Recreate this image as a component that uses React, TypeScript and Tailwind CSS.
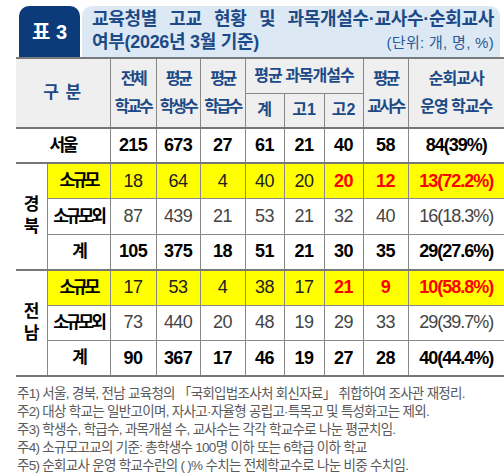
import React from 'react'

const FONT = { fontFamily: '"Liberation Sans", "Noto Sans CJK KR", sans-serif' }

type Row = {
  label: string
  vals: (string | number)[]
  kind: 'small' | 'other' | 'total'
  red?: number[]
}

const regions: { name: string[]; rows: Row[] }[] = [
  {
    name: ['경', '북'],
    rows: [
      { label: '소규모', vals: [18, 64, 4, 40, 20, 20, 12, '13(72.2%)'], kind: 'small', red: [5, 6, 7] },
      { label: '소규모외', vals: [87, 439, 21, 53, 21, 32, 40, '16(18.3%)'], kind: 'other' },
      { label: '계', vals: [105, 375, 18, 51, 21, 30, 35, '29(27.6%)'], kind: 'total' },
    ],
  },
  {
    name: ['전', '남'],
    rows: [
      { label: '소규모', vals: [17, 53, 4, 38, 17, 21, 9, '10(58.8%)'], kind: 'small', red: [5, 6, 7] },
      { label: '소규모외', vals: [73, 440, 20, 48, 19, 29, 33, '29(39.7%)'], kind: 'other' },
      { label: '계', vals: [90, 367, 17, 46, 19, 27, 28, '40(44.4%)'], kind: 'total' },
    ],
  },
]

const notes = [
  '주1) 서울, 경북, 전남 교육청의 「국회입법조사처 회신자료」 취합하여 조사관 재정리.',
  '주2) 대상 학교는 일반고이며, 자사고·자율형 공립고·특목고 및 특성화고는 제외.',
  '주3) 학생수, 학급수, 과목개설 수, 교사수는 각각 학교수로 나눈 평균치임.',
  '주4) 소규모고교의 기준: 총학생수 100명 이하 또는 6학급 이하 학교',
  '주5) 순회교사 운영 학교수란의 ( )% 수치는 전체학교수로 나눈 비중 수치임.',
]

function cellClass(row: Row, i: number) {
  const red = row.red?.includes(i)
  const last = i === 7 ? 'tracking-[-1px]' : ''
  if (red) return `text-[#ff0000] font-bold ${last}`
  if (row.kind === 'total') return `text-black font-bold ${last}`
  if (row.kind === 'small') return `text-[#222] ${last}`
  return `text-[#444] ${last}`
}

export default function App() {
  return (
    <div className="w-[504px] h-[473px] bg-white overflow-hidden" style={FONT}>
      {/* title */}
      <div className="flex pt-[6px] pl-[19px] h-[57px]">
        <div className="w-[61px] bg-[#0b3b78] rounded-t-[10px] flex items-center justify-center text-white font-bold text-[20px]">
          표 3
        </div>
        <div className="ml-[2px] w-[418px] bg-[#dce8f4] rounded-t-[10px] pl-[10px] pr-[6px] pt-[2px] text-[#1c4a86]">
          <div className="flex justify-between font-bold text-[18px] leading-[23px] tracking-[-0.3px]">
            <span>교육청별</span><span>고교</span><span>현황</span><span>및</span><span>과목개설수·교사수·순회교사</span>
          </div>
          <div className="flex justify-between items-end leading-[23px]">
            <span className="font-bold text-[18px] tracking-[-0.3px]">여부(2026년 3월 기준)</span>
            <span className="text-[15px] text-[#2a5a96] tracking-[0.3px]">(단위: 개, 명, %)</span>
          </div>
        </div>
      </div>

      {/* table */}
      <table className="ml-[16px] border-collapse table-fixed w-[488px] text-center">
        <colgroup>
          <col className="w-[31px]" />
          <col className="w-[63px]" />
          <col className="w-[46px]" />
          <col className="w-[44px]" />
          <col className="w-[45px]" />
          <col className="w-[39px]" />
          <col className="w-[40px]" />
          <col className="w-[39px]" />
          <col className="w-[45px]" />
          <col className="w-[96px]" />
        </colgroup>
        <thead className="bg-[#efefef] text-[#1c4a86] font-bold text-[16px] leading-[28px]">
          <tr className="h-[35px] border-t-2 border-[#7a7a7a]">
            <th rowSpan={2} colSpan={2} className="border-r border-[#888] tracking-[1px] text-[17px]">구 분</th>
            <th rowSpan={2} className="border-r border-[#888] tracking-[-2.5px]">전체<br />학교수</th>
            <th rowSpan={2} className="border-r border-[#888] tracking-[-2.5px]">평균<br />학생수</th>
            <th rowSpan={2} className="border-r border-[#888] tracking-[-2.5px]">평균<br />학급수</th>
            <th colSpan={3} className="border-r border-b border-[#888] tracking-[-1px]">평균 과목개설수</th>
            <th rowSpan={2} className="border-r border-[#888] tracking-[-2.5px]">평균<br />교사수</th>
            <th rowSpan={2} className="tracking-[-1px]">순회교사<br />운영 학교수</th>
          </tr>
          <tr className="h-[35px]">
            <th className="border-r border-[#888]">계</th>
            <th className="border-r border-[#888]">고1</th>
            <th className="border-r border-[#888]">고2</th>
          </tr>
        </thead>
        <tbody className="text-[18px] tracking-[-0.6px]">
          <tr className="h-[35px] border-t-2 border-[#777] font-bold text-black">
            <td colSpan={2} className="border-r border-[#888] tracking-[-2.5px] text-[17px]">서울</td>
            {[215, 673, 27, 61, 21, 40, 58, '84(39%)'].map((v, i) => (
              <td key={i} className={i < 7 ? 'border-r border-[#888]' : 'tracking-[-1px]'}>{v}</td>
            ))}
          </tr>
          {regions.map(reg =>
            reg.rows.map((row, ri) => (
              <tr
                key={reg.name.join('') + ri}
                className={`h-[35.5px] ${ri === 0 ? 'border-t-2 border-[#777]' : 'border-t border-[#888]'}`}
              >
                {ri === 0 && (
                  <td rowSpan={3} className="border-r border-[#888] font-bold text-black text-[17px] leading-[22px] bg-white">
                    {reg.name[0]}<br />{reg.name[1]}
                  </td>
                )}
                <td
                  className={`border-r border-[#888] font-bold text-black text-[17px] tracking-[-3px] ${row.kind === 'small' ? 'bg-[#ffff00]' : ''}`}
                >
                  {row.label}
                </td>
                {row.vals.map((v, i) => (
                  <td
                    key={i}
                    className={`${i < 7 ? 'border-r border-[#888]' : ''} ${row.kind === 'small' ? 'bg-[#ffff00]' : ''} ${cellClass(row, i)}`}
                  >
                    {v}
                  </td>
                ))}
              </tr>
            ))
          )}
          <tr className="h-0 border-t-2 border-[#777]"><td colSpan={10} className="p-0" /></tr>
        </tbody>
      </table>

      {/* notes */}
      <div className="pl-[17px] pt-[8px] text-[13.5px] leading-[18px] text-[#5a5a5a] tracking-[-0.7px]">
        {notes.map(n => (
          <div key={n}>{n}</div>
        ))}
      </div>
    </div>
  )
}
